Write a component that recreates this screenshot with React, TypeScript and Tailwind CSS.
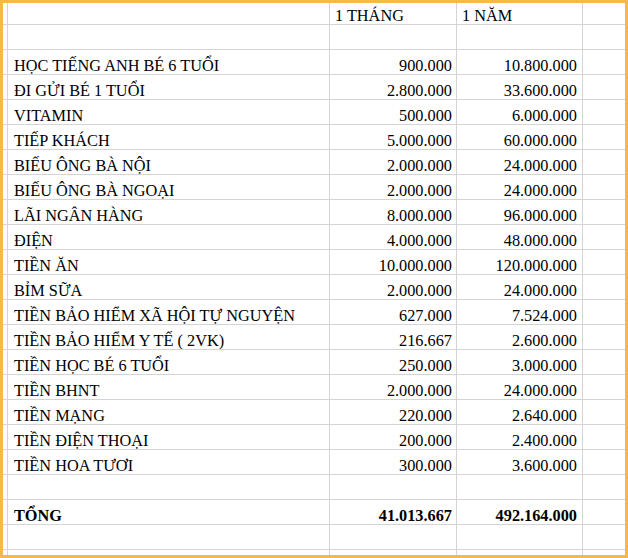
const rows: [string, string, string][] = [
  ["", "", ""],
  ["HỌC TIẾNG ANH BÉ 6 TUỔI", "900.000", "10.800.000"],
  ["ĐI GỬI BÉ 1 TUỔI", "2.800.000", "33.600.000"],
  ["VITAMIN", "500.000", "6.000.000"],
  ["TIẾP KHÁCH", "5.000.000", "60.000.000"],
  ["BIẾU ÔNG BÀ NỘI", "2.000.000", "24.000.000"],
  ["BIẾU ÔNG BÀ NGOẠI", "2.000.000", "24.000.000"],
  ["LÃI NGÂN HÀNG", "8.000.000", "96.000.000"],
  ["ĐIỆN", "4.000.000", "48.000.000"],
  ["TIỀN ĂN", "10.000.000", "120.000.000"],
  ["BỈM SỮA", "2.000.000", "24.000.000"],
  ["TIỀN BẢO HIỂM XÃ HỘI TỰ NGUYỆN", "627.000", "7.524.000"],
  ["TIỀN BẢO HIỂM Y TẾ ( 2VK)", "216.667", "2.600.000"],
  ["TIỀN HỌC BÉ 6 TUỔI", "250.000", "3.000.000"],
  ["TIỀN BHNT", "2.000.000", "24.000.000"],
  ["TIỀN MẠNG", "220.000", "2.640.000"],
  ["TIỀN ĐIỆN THOẠI", "200.000", "2.400.000"],
  ["TIỀN HOA TƯƠI", "300.000", "3.600.000"],
  ["", "", ""],
];

const cell = "border-r border-b border-[#d4d4d4] flex items-end pb-0 whitespace-nowrap overflow-hidden";

function Row({ a, b, c, bold, h = "h-[25px]" }: { a: string; b: string; c: string; bold?: boolean; h?: string }) {
  const w = bold ? "font-bold" : "";
  return (
    <>
      <div className={`${cell} ${h}`} />
      <div className={`${cell} ${h} ${w} pl-[6px]`}>{a}</div>
      <div className={`${cell} ${h} ${w} justify-end pr-[4px]`}>{b}</div>
      <div className={`${cell} ${h} ${w} justify-end pr-[5px]`}>{c}</div>
      <div className={`${cell} ${h} border-r-0`} />
    </>
  );
}

export default function App() {
  return (
    <div className="w-[628px] h-[558px] bg-[#f4b84c] p-[3px]">
      <div
        className="w-full h-full bg-white overflow-hidden grid grid-cols-[5px_322px_127px_126px_1fr] content-start text-[16.3px] text-black leading-none"
        style={{ fontFamily: '"Liberation Serif", "Times New Roman", serif' }}
      >
        <div className={`${cell} h-[22px]`} />
        <div className={`${cell} h-[22px]`} />
        <div className={`${cell} h-[22px] pl-[5px]`}>1 THÁNG</div>
        <div className={`${cell} h-[22px] pl-[5px]`}>1 NĂM</div>
        <div className={`${cell} h-[22px] border-r-0`} />
        {rows.map((r, i) => (
          <Row key={i} a={r[0]} b={r[1]} c={r[2]} />
        ))}
        <Row a="TỔNG" b="41.013.667" c="492.164.000" bold />
        <Row a="" b="" c="" />
        <Row a="" b="" c="" />
      </div>
    </div>
  );
}
